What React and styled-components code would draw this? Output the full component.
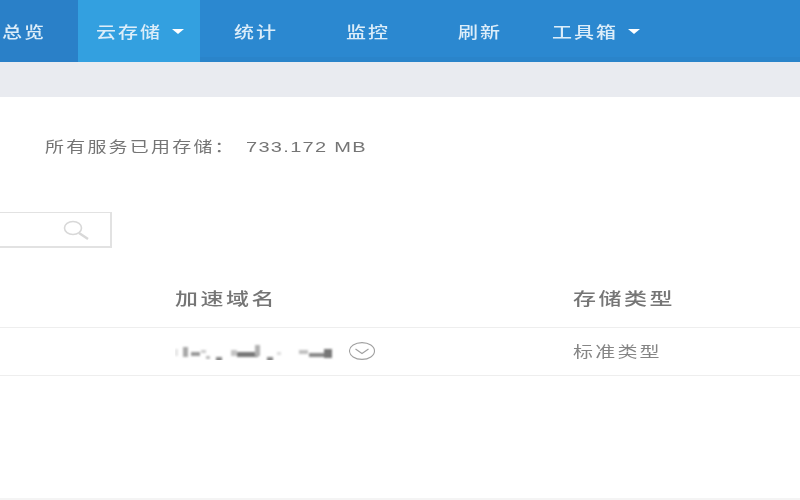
import React from 'react';
import styled, { createGlobalStyle } from 'styled-components';

const NAV_ITEMS = [
  { label: '云存储', caret: true, active: true },
  { label: '统计' },
  { label: '监控' },
  { label: '刷新' },
  { label: '工具箱', caret: true, tight: true },
];

const MOSAIC = [
  [0, 4, 3, 7, '#e4e4e4'], [8, 2, 5, 10, '#a8a8a8'], [16, 7, 9, 4, '#999'], [26, 5, 5, 3, '#ccc'],
  [31, 11, 4, 3, '#bbb'], [41, 12, 6, 5, '#888'], [56, 5, 6, 6, '#c4c4c4'], [62, 7, 21, 5, '#777'],
  [80, 0, 5, 11, '#b0b0b0'], [92, 12, 6, 5, '#888'], [102, 7, 4, 3, '#ddd'], [124, 5, 9, 4, '#c0c0c0'],
  [134, 8, 15, 4, '#888'], [149, 4, 8, 9, '#777'],
];

const App = () => {
  return (
    <Page>
      <GlobalStyle />
      <Nav>
        <FirstItem>
          <NavLabel>总览</NavLabel>
        </FirstItem>
        {NAV_ITEMS.map((item) => (
          <NavItem key={item.label} $active={item.active} $tight={item.tight}>
            <NavLabel>{item.label}</NavLabel>
            {item.caret && <Caret />}
          </NavItem>
        ))}
      </Nav>
      <Band />
      <Summary>
        <SummaryLabel>所有服务已用存储：</SummaryLabel>
        <SummaryValue>733.172 MB</SummaryValue>
      </Summary>
      <SearchRow>
        <SearchBox>
          <SearchIcon width="28" height="22" viewBox="0 0 28 22" fill="none" stroke="#d8d8d8">
            <ellipse cx="11" cy="9" rx="8.5" ry="6.5" strokeWidth="1.6" />
            <path d="M17 14 L26 20" strokeWidth="2.4" />
          </SearchIcon>
        </SearchBox>
      </SearchRow>
      <HeadRow>
        <DomainCell>
          <HeadText>加速域名</HeadText>
        </DomainCell>
        <HeadText>存储类型</HeadText>
      </HeadRow>
      <BodyRow>
        <DomainCell>
          <svg width="160" height="18" viewBox="0 -3 160 18">
            <defs>
              <filter id="mosaic-blur">
                <feGaussianBlur stdDeviation="1" />
              </filter>
            </defs>
            <g filter="url(#mosaic-blur)">
              {MOSAIC.map(([x, y, w, h, fill]) => (
                <rect key={`${x}-${y}`} x={x} y={y} width={w} height={h} fill={fill} />
              ))}
            </g>
          </svg>
          <svg width="28" height="18" viewBox="0 0 28 18" fill="none" stroke="#a0a0a0">
            <ellipse cx="13" cy="9" rx="12.5" ry="8.4" strokeWidth="1.1" />
            <path d="M6.5 7 L13 11.5 L19.5 7" strokeWidth="1.1" />
          </svg>
        </DomainCell>
        <BodyText>标准类型</BodyText>
      </BodyRow>
      <Footer />
    </Page>
  );
};

const GlobalStyle = createGlobalStyle`
  html, body {
    margin: 0;
    padding: 0;
    background: #fff;
    overflow: hidden;
  }
`;

const Page = styled.div`
  width: 800px;
  height: 500px;
  display: flex;
  flex-direction: column;
  font-family: 'Liberation Sans', 'Noto Sans CJK SC', sans-serif;
`;

const Nav = styled.div`
  height: 62px;
  flex: none;
  display: flex;
  background: #2b88d0;
  box-shadow: inset 0 -5px 0 #2a84ca;
`;

const FirstItem = styled.div`
  width: 78px;
  flex: none;
  display: flex;
  align-items: center;
  justify-content: flex-end;
  padding-right: 32px;
  box-sizing: border-box;
  background: #2a80c8;
`;

const NavItem = styled.div`
  display: flex;
  align-items: center;
  flex: none;
  padding: 0 ${({ $tight, $active }) => ($active ? '16px' : $tight ? '16px' : '34px')} 0
    ${({ $tight, $active }) => ($active ? '18px' : $tight ? '16px' : '34px')};
  background: ${({ $active }) => ($active ? '#33a0e0' : 'transparent')};
`;

const NavLabel = styled.span`
  font-size: 20px;
  font-weight: 500;
  letter-spacing: 2px;
  color: #dcedf9;
  transform: scaleY(0.8);
  white-space: nowrap;
  filter: blur(0.4px);
`;

const Caret = styled.span`
  width: 0;
  height: 0;
  margin-left: 10px;
  border-left: 6px solid transparent;
  border-right: 6px solid transparent;
  border-top: 5px solid #fff;
`;

const Band = styled.div`
  height: 35px;
  flex: none;
  background: #e9ebf0;
`;

const Summary = styled.div`
  height: 100px;
  flex: none;
  display: flex;
  align-items: flex-start;
  padding: 36px 0 0 45px;
  box-sizing: border-box;
  color: #757575;
  white-space: nowrap;
`;

const SummaryLabel = styled.span`
  font-size: 19px;
  line-height: 28px;
  letter-spacing: 2.2px;
  width: 201px;
  transform: scaleY(0.78);
  filter: blur(0.4px);
`;

const SummaryValue = styled.span`
  font-size: 20px;
  line-height: 28px;
  letter-spacing: 1.3px;
  transform: scaleY(0.72);
  filter: blur(0.4px);
`;

const SearchRow = styled.div`
  flex: none;
  height: 51px;
  width: 112px;
  box-sizing: border-box;
`;

const SearchBox = styled.div`
  height: 36px;
  margin-top: 15px;
  box-sizing: border-box;
  border: 1px solid #e2e2e2;
  border-left: 0;
  border-bottom-width: 2px;
  border-right-width: 2px;
  display: flex;
  align-items: center;
  justify-content: flex-end;
  padding-right: 20px;
`;

const SearchIcon = styled.svg`
  filter: blur(0.5px);
`;

const Row = styled.div`
  flex: none;
  display: flex;
  align-items: center;
  border-bottom: 1px solid #eeeeee;
  box-sizing: border-box;
  padding-left: 175px;
`;

const HeadRow = styled(Row)`
  height: 80px;
  padding-top: 20px;
`;

const BodyRow = styled(Row)`
  height: 48px;
  padding-bottom: 2px;
`;

const DomainCell = styled.div`
  width: 398px;
  flex: none;
  display: flex;
  align-items: center;
  gap: 14px;
`;

const HeadText = styled.span`
  font-size: 23px;
  font-weight: 500;
  letter-spacing: 2.5px;
  color: #757575;
  transform: scaleY(0.72);
  white-space: nowrap;
  filter: blur(0.4px);
`;

const BodyText = styled.span`
  font-size: 20px;
  letter-spacing: 2.2px;
  color: #858585;
  transform: scaleY(0.74);
  white-space: nowrap;
  filter: blur(0.4px);
`;

const Footer = styled.div`
  margin-top: auto;
  height: 2px;
  background: #f4f4f4;
`;

export default App;
